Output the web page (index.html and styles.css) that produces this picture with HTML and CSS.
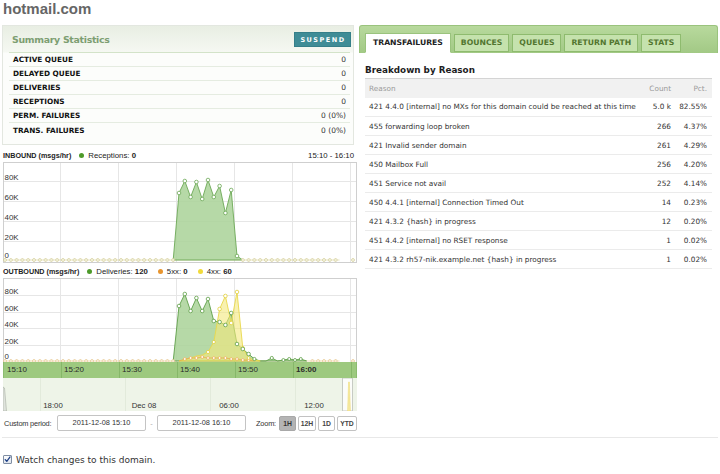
FILE: index.html
```html
<!DOCTYPE html>
<html>
<head>
<meta charset="utf-8">
<title>hotmail.com</title>
<link rel="stylesheet" href="styles.css">
</head>
<body>
<div class="page">
  <h1 class="domain">hotmail.com</h1>
  <div class="cols">
    <div class="left">
      <section class="summary">
        <div class="summary-head">
          <h2>Summary Statistics</h2>
          <button class="suspend">SUSPEND</button>
        </div>
        <div class="stat-row"><span class="lbl">ACTIVE QUEUE</span><span class="val">0</span></div>
        <div class="stat-row"><span class="lbl">DELAYED QUEUE</span><span class="val">0</span></div>
        <div class="stat-row"><span class="lbl">DELIVERIES</span><span class="val">0</span></div>
        <div class="stat-row"><span class="lbl">RECEPTIONS</span><span class="val">0</span></div>
        <div class="stat-row"><span class="lbl">PERM. FAILURES</span><span class="val">0 (0%)</span></div>
        <div class="stat-row"><span class="lbl">TRANS. FAILURES</span><span class="val">0 (0%)</span></div>
      </section>

      <div class="legend legend-in">
        <b class="ltitle">INBOUND (msgs/hr)</b>
        <span class="dot dot-green"></span><span>Receptions: <b>0</b></span>
        <span class="range">15:10 - 16:10</span>
      </div>
      <svg class="chart" width="354" height="101" viewBox="0 0 354 101">
        <defs>
          <pattern id="zin" x="-0.9" y="95" width="5.8" height="6" patternUnits="userSpaceOnUse">
            <circle cx="2.9" cy="3" r="1.4" fill="#fff" stroke="#c9c27c" stroke-width="0.7"/>
          </pattern>
        </defs>
        <rect x="0.5" y="0.5" width="353" height="100" fill="#fff" stroke="#cfcfcf"/>
        <g stroke="#e6e6e6" stroke-width="1">
          <path d="M57.5 1V100M115.5 1V100M173.5 1V100M231.5 1V100M289.5 1V100M347.5 1V100"/>
          <path d="M1 19.5H353M1 39.5H353M1 59.5H353M1 79.5H353"/>
        </g>
        <g class="ylab">
          <text x="1.5" y="18">80K</text>
          <text x="1.5" y="38">60K</text>
          <text x="1.5" y="58">40K</text>
          <text x="1.5" y="78">20K</text>
          <text x="1.5" y="96">0</text>
        </g>
        <path d="M2 98H336" stroke="#d6d09a" stroke-width="0.6"/>
        <polygon points="170.2,98 176,31 181.8,19 187.6,35 193.4,20 199.2,37 205,18 210.8,35 216.6,24 222.4,51 228.2,28 234,94 239.8,98" fill="#a9d298" fill-opacity="0.85" stroke="#6ca856" stroke-width="0.9" stroke-linejoin="round"/>
        <rect x="0" y="95" width="174" height="6" fill="url(#zin)"/>
        <rect x="237.8" y="95" width="98.6" height="6" fill="url(#zin)"/>
        <circle cx="350" cy="98" r="1.4" fill="#fff" stroke="#c9c27c" stroke-width="0.7"/>
        <g fill="#fff" stroke="#6ca856" stroke-width="0.8">
          <circle cx="176" cy="31" r="1.8"/><circle cx="181.8" cy="19" r="1.8"/>
          <circle cx="187.6" cy="35" r="1.8"/><circle cx="193.4" cy="20" r="1.8"/>
          <circle cx="199.2" cy="37" r="1.8"/><circle cx="205" cy="18" r="1.8"/>
          <circle cx="210.8" cy="35" r="1.8"/><circle cx="216.6" cy="24" r="1.8"/>
          <circle cx="222.4" cy="51" r="1.8"/><circle cx="228.2" cy="28" r="1.8"/>
          <circle cx="234" cy="94" r="1.8"/>
        </g>
      </svg>

      <div class="legend legend-out">
        <b class="ltitle">OUTBOUND (msgs/hr)</b>
        <span class="dot dot-green"></span><span>Deliveries: <b>120</b></span>
        <span class="dot dot-orange"></span><span>5xx: <b>0</b></span>
        <span class="dot dot-yellow"></span><span>4xx: <b>60</b></span>
      </div>
      <svg class="chart" width="354" height="84" viewBox="0 0 354 84">
        <defs>
          <pattern id="zout" x="-0.9" y="80" width="5.8" height="6" patternUnits="userSpaceOnUse">
            <circle cx="2.9" cy="3" r="1.4" fill="#fff" stroke="#e2b872" stroke-width="0.7"/>
          </pattern>
        </defs>
        <rect x="0.5" y="0.5" width="353" height="84" fill="#fff" stroke="#cfcfcf"/>
        <g stroke="#e6e6e6" stroke-width="1">
          <path d="M57.5 1V84M115.5 1V84M173.5 1V84M231.5 1V84M289.5 1V84M347.5 1V84"/>
          <path d="M1 17.5H353M1 34.5H353M1 50.5H353M1 67.5H353"/>
        </g>
        <g class="ylab">
          <text x="1.5" y="16">80K</text>
          <text x="1.5" y="33">60K</text>
          <text x="1.5" y="49">40K</text>
          <text x="1.5" y="66">20K</text>
          <text x="1.5" y="81">0</text>
        </g>
        <path d="M2 83H336" stroke="#e6c98f" stroke-width="0.6"/>
        <polygon points="170.2,83 176,28 181.8,16 187.6,33 193.4,20 199.2,33 205,21 210.8,43 216.6,44 222.4,47 228.2,35 234,66 239.8,71 245.6,76 251.4,81 257.2,83 263,83 268.8,80 274.6,83 280.4,82 286.2,81 292,82 297.8,81 303.6,83" fill="#a9d298" fill-opacity="0.85" stroke="#5f9f48" stroke-width="0.9" stroke-linejoin="round"/>
        <polygon points="176,83 181.8,82 187.6,80 193.4,78 199.2,77 205,74 210.8,64 216.6,31 222.4,18 228.2,45 234,14 239.8,70 245.6,80 251.4,82 257.2,83" fill="#f4e77c" fill-opacity="0.6" stroke="#e9d84c" stroke-width="0.9" stroke-linejoin="round"/>
        <polyline points="176,83 181.8,81 187.6,80 193.4,80 199.2,79 205,80 210.8,80 216.6,80 222.4,80 228.2,81 234,81 239.8,82 245.6,82 251.4,83" fill="none" stroke="#e8a94a" stroke-width="0.7"/>
        <rect x="0" y="80" width="174" height="6" fill="url(#zout)"/>
        <rect x="307.4" y="80" width="29" height="6" fill="url(#zout)"/>
        <circle cx="350" cy="83" r="1.4" fill="#fff" stroke="#e2b872" stroke-width="0.7"/>
        <g fill="#fff" stroke="#e8a94a" stroke-width="0.7">
          <circle cx="181.8" cy="81" r="1.4"/><circle cx="187.6" cy="80" r="1.4"/>
          <circle cx="193.4" cy="80" r="1.4"/><circle cx="199.2" cy="79" r="1.4"/>
          <circle cx="205" cy="80" r="1.4"/><circle cx="210.8" cy="80" r="1.4"/>
          <circle cx="216.6" cy="80" r="1.4"/><circle cx="222.4" cy="80" r="1.4"/>
          <circle cx="228.2" cy="81" r="1.4"/><circle cx="234" cy="81" r="1.4"/>
          <circle cx="239.8" cy="82" r="1.4"/><circle cx="245.6" cy="82" r="1.4"/>
        </g>
        <g fill="#fff" stroke="#e2cf3a" stroke-width="0.8">
          <circle cx="205" cy="74" r="1.6"/><circle cx="210.8" cy="64" r="1.6"/>
          <circle cx="216.6" cy="31" r="1.8"/><circle cx="222.4" cy="18" r="1.8"/>
          <circle cx="228.2" cy="45" r="1.8"/><circle cx="234" cy="14" r="1.8"/>
          <circle cx="239.8" cy="70" r="1.6"/><circle cx="245.6" cy="80" r="1.4"/>
        </g>
        <g fill="#fff" stroke="#5f9f48" stroke-width="0.8">
          <circle cx="176" cy="28" r="1.8"/><circle cx="181.8" cy="16" r="1.8"/>
          <circle cx="187.6" cy="33" r="1.8"/><circle cx="193.4" cy="20" r="1.8"/>
          <circle cx="199.2" cy="33" r="1.8"/><circle cx="205" cy="21" r="1.8"/>
          <circle cx="210.8" cy="43" r="1.8"/><circle cx="216.6" cy="44" r="1.8"/>
          <circle cx="222.4" cy="47" r="1.8"/><circle cx="228.2" cy="35" r="1.8"/>
          <circle cx="234" cy="66" r="1.8"/><circle cx="239.8" cy="71" r="1.8"/>
          <circle cx="245.6" cy="76" r="1.8"/><circle cx="251.4" cy="81" r="1.6"/>
          <circle cx="268.8" cy="80" r="1.6"/><circle cx="280.4" cy="82" r="1.5"/>
          <circle cx="286.2" cy="81" r="1.5"/><circle cx="292" cy="82" r="1.5"/>
          <circle cx="297.8" cy="81" r="1.5"/>
        </g>
      </svg>
      <div class="axis">
        <span class="tick">15:10</span>
        <span class="tick">15:20</span>
        <span class="tick">15:30</span>
        <span class="tick">15:40</span>
        <span class="tick">15:50</span>
        <span class="tick strong">16:00</span>
        <span class="tick"></span>
      </div>
      <svg class="navigator" width="354" height="33" viewBox="0 0 354 33">
        <rect width="354" height="33" fill="#eef4e8"/>
        <g stroke="#e2eadb" stroke-width="1">
          <path d="M37.5 0V33M122.5 0V33M207.5 0V33M292.5 0V33"/>
        </g>
        <polygon points="0,9 1.5,10 3.5,33 0,33" fill="#dfe3dc" stroke="#a9b0a6" stroke-width="0.6"/>
        <rect x="339.5" y="0" width="10" height="33" fill="#fbfcfa" stroke="#c7cbc4" stroke-width="1"/>
        <polygon points="344.6,33 345.6,4 346.4,4 347.4,33" fill="#f6eaa4" stroke="#eed86a" stroke-width="0.5"/>
        <g class="navlab">
          <text x="50" y="30">18:00</text>
          <text x="141" y="30">Dec 08</text>
          <text x="226" y="30">06:00</text>
          <text x="311" y="30">12:00</text>
        </g>
      </svg>
      <div class="period">
        <span class="plabel">Custom period:</span>
        <span class="pinput">2011-12-08 15:10</span>
        <span class="dash">-</span>
        <span class="pinput">2011-12-08 16:10</span>
        <span class="zlabel">Zoom:</span>
        <span class="zbtn zbtn-1h active">1H</span>
        <span class="zbtn zbtn-12h">12H</span>
        <span class="zbtn zbtn-1d">1D</span>
        <span class="zbtn zbtn-ytd">YTD</span>
      </div>
    </div>

    <div class="right">
      <div class="tabbar">
        <span class="tab active">TRANSFAILURES</span>
        <span class="tab">BOUNCES</span>
        <span class="tab">QUEUES</span>
        <span class="tab">RETURN PATH</span>
        <span class="tab">STATS</span>
      </div>
      <div class="panel">
        <h3>Breakdown by Reason</h3>
        <table class="reasons">
          <thead>
            <tr><th class="c-reason">Reason</th><th class="c-count">Count</th><th class="c-pct">Pct.</th></tr>
          </thead>
          <tbody>
            <tr><td class="c-reason">421 4.4.0 [internal] no MXs for this domain could be reached at this time</td><td class="c-count">5.0 k</td><td class="c-pct">82.55%</td></tr>
            <tr><td class="c-reason">455 forwarding loop broken</td><td class="c-count">266</td><td class="c-pct">4.37%</td></tr>
            <tr><td class="c-reason">421 Invalid sender domain</td><td class="c-count">261</td><td class="c-pct">4.29%</td></tr>
            <tr><td class="c-reason">450 Mailbox Full</td><td class="c-count">256</td><td class="c-pct">4.20%</td></tr>
            <tr><td class="c-reason">451 Service not avail</td><td class="c-count">252</td><td class="c-pct">4.14%</td></tr>
            <tr><td class="c-reason">450 4.4.1 [internal] Connection Timed Out</td><td class="c-count">14</td><td class="c-pct">0.23%</td></tr>
            <tr><td class="c-reason">421 4.3.2 {hash} in progress</td><td class="c-count">12</td><td class="c-pct">0.20%</td></tr>
            <tr><td class="c-reason">451 4.4.2 [internal] no RSET response</td><td class="c-count">1</td><td class="c-pct">0.02%</td></tr>
            <tr><td class="c-reason">421 4.3.2 rh57-nik.example.net {hash} in progress</td><td class="c-count">1</td><td class="c-pct">0.02%</td></tr>
          </tbody>
        </table>
      </div>
    </div>
  </div>
  <div class="divider"></div>
  <label class="watch">
    <span class="cbox"><svg width="9" height="9" viewBox="0 0 9 9"><path d="M1.6 4.6L3.6 7L7.8 1.2" fill="none" stroke="#1d3f86" stroke-width="1.6" stroke-linecap="round" stroke-linejoin="round"/></svg></span>
    <span>Watch changes to this domain.</span>
  </label>
</div>
</body>
</html>
```

FILE: styles.css
```css
* { box-sizing: border-box; }

body {
  margin: 0;
  background: #fff;
  font-family: "DejaVu Sans", Verdana, sans-serif;
  color: #222;
}

.page {
  width: 720px;
  padding: 0 2px;
}

.domain {
  margin: 0 0 0 1px;
  height: 25px;
  line-height: 25px;
  font: bold 15px "Liberation Sans", Arial, sans-serif;
  color: #666;
}

.cols {
  display: flex;
  gap: 2px;
  align-items: flex-start;
}

.left { width: 355px; flex: none; }
.right { width: 359px; flex: none; }

/* Summary */
.summary {
  width: 352px;
  border: 1px solid #e3e7e0;
  background: linear-gradient(#e8eee3, #f5f8f2 26px, #fcfdfb 27px);
  padding: 0 3px 7px 6px;
}

.summary-head {
  height: 27px;
  display: flex;
  align-items: center;
  justify-content: space-between;
  border-bottom: 1px solid #d3e3c9;
}

.summary-head h2 {
  margin: 0;
  padding-left: 3px;
  font-size: 9.4px;
  letter-spacing: -0.3px;
  font-weight: bold;
  color: #7d9e72;
}

.suspend {
  width: 57px;
  height: 15px;
  margin-right: -1px;
  margin-top: 1px;
  padding: 0;
  border: 1px solid #357f89;
  background: #3f8c96;
  color: #fff;
  font: bold 6.5px "DejaVu Sans", Verdana, sans-serif;
  letter-spacing: 1.5px;
  text-indent: 1px;
}

.stat-row {
  display: flex;
  justify-content: space-between;
  align-items: center;
  height: 14px;
  padding: 0 4px;
  border-bottom: 1px solid #e5ece1;
}

.stat-row:last-child { border-bottom: none; }

.stat-row .lbl {
  font-size: 7.3px;
  font-weight: bold;
  color: #111;
}

.stat-row .val {
  font-size: 7.5px;
  color: #333;
}

/* Chart legends */
.legend {
  display: flex;
  align-items: center;
  height: 14px;
  padding-left: 1px;
  font: 7.8px "Liberation Sans", Arial, sans-serif;
  color: #222;
  white-space: nowrap;
}

.legend-in { margin-top: 3px; }
.legend-out { margin-top: 1px; }

.legend .ltitle {
  font-size: 7.2px;
  font-weight: bold;
  margin-right: 8px;
}

.dot {
  width: 5px;
  height: 5px;
  border-radius: 50%;
  margin-right: 4px;
  flex: none;
}

.legend .dot + span { margin-right: 10px; }

.dot-green { background: #4d9a2a; }
.dot-orange { background: #e8952e; }
.dot-yellow { background: #f1da3a; }

.legend .range { margin-left: auto; margin-right: 3px; }

.chart {
  display: block;
  margin-left: 1px;
}

.ylab text {
  font: 7.9px "Liberation Sans", Arial, sans-serif;
  fill: #333;
}

/* Time axis */
.axis {
  margin-left: 1px;
  width: 354px;
  height: 16px;
  display: grid;
  grid-template-columns: 57px repeat(5, 58px) 1fr;
  background: #9dc97f;
  border-left: 1px solid #8cbc70;
  border-right: 1px solid #8cbc70;
}

.tick {
  border-left: 1px solid #86b769;
  padding-left: 2px;
  font: 8px/16px "Liberation Sans", Arial, sans-serif;
  color: #2b2b2b;
}

.tick:first-child {
  border-left: none;
  padding-left: 3px;
}

.tick.strong { font-weight: bold; }

/* Navigator */
.navigator {
  display: block;
  margin-left: 1px;
}

.navlab text {
  font: 7.8px "Liberation Sans", Arial, sans-serif;
  fill: #333;
  text-anchor: middle;
}

/* Period controls */
.period {
  display: flex;
  align-items: center;
  height: 18px;
  margin-top: 3px;
  padding-left: 2px;
  font: 7.4px "Liberation Sans", Arial, sans-serif;
  color: #333;
  white-space: nowrap;
}

.period > * { flex: none; }

.plabel {
  width: 51px;
  letter-spacing: -0.2px;
}

.pinput {
  width: 89px;
  height: 16px;
  margin-left: 2px;
  border: 1px solid #c4c4c4;
  border-radius: 2px;
  text-align: center;
  line-height: 14px;
  background: #fff;
}

.dash {
  width: 11px;
  text-align: center;
  color: #aaa;
}

.pinput + .dash + .pinput { margin-left: 0; }

.zlabel {
  width: 20px;
  margin-left: 10px;
  margin-right: 3px;
  letter-spacing: -0.2px;
}

.zbtn {
  height: 15px;
  padding: 0;
  margin-right: 2px;
  border: 1px solid #c2c2c2;
  border-radius: 2px;
  line-height: 13px;
  text-align: center;
  font-size: 6.8px;
  font-weight: bold;
  color: #444;
  background: #fff;
}

.zbtn-1h { width: 17px; }
.zbtn-12h { width: 18px; }
.zbtn-1d { width: 17px; }
.zbtn-ytd { width: 20px; margin-right: 0; }

.zbtn.active {
  background: #b4b4b4;
  border-color: #a8a8a8;
  color: #333;
}

/* Right column */
.tabbar {
  height: 28px;
  display: flex;
  align-items: flex-end;
  gap: 3px;
  padding-left: 5px;
  background: linear-gradient(#b8d99d, #a2c985);
  border: 1px solid #9ac37d;
  border-bottom: none;
  border-radius: 3px 3px 0 0;
}

.tab {
  height: 18px;
  margin-bottom: 1px;
  padding: 0 6px;
  line-height: 16px;
  font-size: 7.7px;
  font-weight: bold;
  color: #52752f;
  background: #c5e2ad;
  border: 1px solid #8ebb6e;
}

.tab.active {
  height: 20px;
  margin-bottom: 0;
  line-height: 18px;
  padding: 0 7px;
  background: #fff;
  color: #222;
  border-color: #9ac37d;
  border-bottom-color: #fff;
}

.panel {
  padding: 0 6px;
}

.panel h3 {
  margin: 9px 0 0;
  line-height: 16px;
  font-size: 8.8px;
  font-weight: bold;
  color: #1e1e1e;
}

.reasons {
  width: 100%;
  border-collapse: collapse;
  table-layout: fixed;
  font-size: 7.3px;
  white-space: nowrap;
}

.reasons th {
  height: 19px;
  padding: 0;
  font-weight: normal;
  color: #9a9a9a;
  background: #f1f1f1;
  border-top: 1px solid #d4d4d4;
}

.reasons td {
  height: 19px;
  padding: 0;
  color: #333;
  border-bottom: 1px solid #ebebeb;
}

.reasons .c-reason { text-align: left; padding-left: 4px; }
.reasons .c-count { text-align: right; width: 30px; }
.reasons .c-pct { text-align: right; width: 41px; padding-right: 5px; }

/* Footer */
.divider {
  margin-top: 5px;
  border-top: 1px solid #e8e8e8;
}

.watch {
  display: flex;
  align-items: center;
  gap: 4px;
  height: 11px;
  margin-top: 16px;
  padding-left: 1px;
  font-size: 9px;
  color: #333;
}

.cbox {
  width: 9px;
  height: 9px;
  border: 1px solid #7f8ea3;
  border-radius: 1px;
  background: linear-gradient(#fdfdfd, #dfe5ee);
  display: flex;
  align-items: center;
  justify-content: center;
}

.cbox svg { display: block; }
```
